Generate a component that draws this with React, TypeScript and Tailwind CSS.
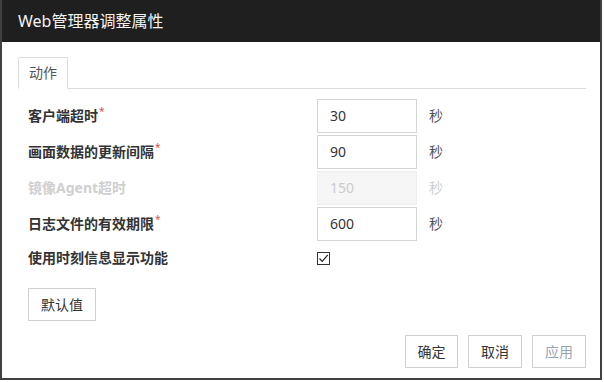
import React from 'react';

const font = { fontFamily: '"Noto Sans", "Noto Sans CJK SC", sans-serif' };

interface FieldRow {
  label: string;
  value: string;
  required?: boolean;
  disabled?: boolean;
}

const rows: FieldRow[] = [
  { label: '客户端超时', value: '30', required: true },
  { label: '画面数据的更新间隔', value: '90', required: true },
  { label: '镜像Agent超时', value: '150', disabled: true },
  { label: '日志文件的有效期限', value: '600', required: true },
];

const Button = ({ children, disabled = false, className = '' }: { children: React.ReactNode; disabled?: boolean; className?: string }) => (
  <button
    className={`h-[33px] border border-[#d0d0d0] bg-white text-[14px] leading-none flex items-center justify-center ${
      disabled ? 'text-[#9aa3b0]' : 'text-[#333]'
    } ${className}`}
  >
    {children}
  </button>
);

export default function App() {
  return (
    <div className="w-[604px] h-[382px] bg-white" style={font}>
      <div className="w-[602px] h-[380px] flex flex-col border-x-2 border-b-2 border-[#404040]">
        {/* Header */}
        <div className="h-[42px] shrink-0 bg-[#1f1f1f] flex items-center pl-4 text-[16px] leading-none text-[#f2f2f2]">
          Web管理器调整属性
        </div>

        <div className="flex-1 flex flex-col pt-[15px] pl-4 pr-[14px] pb-[10px]">
          {/* Tabs */}
          <div className="flex border-b border-[#dcdcdc]">
            <div className="h-[32px] w-[50px] -mb-px border border-[#dcdcdc] border-b-white bg-white rounded-t-[2px] flex items-center justify-center text-[14px] leading-none text-[#555]">
              动作
            </div>
          </div>

          {/* Form */}
          <div className="flex flex-col gap-[2px] pt-[10px] pl-[10px]">
            {rows.map(row => (
              <div key={row.label} className="flex items-center h-[34px]">
                <div
                  className={`w-[289px] text-[14px] font-bold leading-none ${
                    row.disabled ? 'text-[#cfcfcf]' : 'text-[#333]'
                  }`}
                >
                  {row.label}
                  {row.required && (
                    <span className="relative -top-[6px] ml-[1px] text-[10px] font-normal text-[#d9534f]">*</span>
                  )}
                </div>
                <div
                  className={`w-[100px] h-[34px] border flex items-center pl-3 text-[14px] leading-none ${
                    row.disabled
                      ? 'bg-[#f6f6f6] border-[#eeeeee] text-[#cccccc]'
                      : 'bg-white border-[#d4d4d4] text-[#333]'
                  }`}
                >
                  {row.value}
                </div>
                <span className={`ml-3 text-[14px] leading-none ${row.disabled ? 'text-[#cfcfcf]' : 'text-[#555]'}`}>秒</span>
              </div>
            ))}

            <div className="flex items-center h-[30px]">
              <div className="w-[289px] text-[14px] font-bold leading-none text-[#333]">使用时刻信息显示功能</div>
              <div className="w-[13px] h-[13px] border border-[#333] bg-white flex items-center justify-center">
                <svg width="11" height="11" viewBox="0 0 11 11" fill="none">
                  <path d="M1.5 5.5 L4.2 8.3 L9.8 1.8" stroke="#222" strokeWidth="1.2" />
                </svg>
              </div>
            </div>

            <div className="mt-[13px]">
              <Button className="w-[68px]">默认值</Button>
            </div>
          </div>

          {/* Footer */}
          <div className="mt-auto flex justify-end gap-[10px]">
            <Button className="w-[53px]">确定</Button>
            <Button className="w-[54px]">取消</Button>
            <Button disabled className="w-[54px]">应用</Button>
          </div>
        </div>
      </div>
    </div>
  );
}
